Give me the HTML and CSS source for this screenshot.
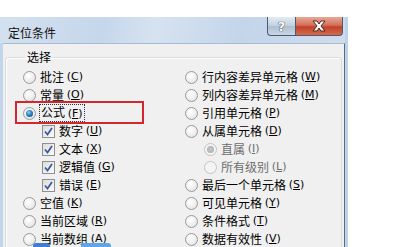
FILE: index.html
```html
<!DOCTYPE html>
<html lang="zh-CN">
<head>
    <meta charset="UTF-8">
    <meta name="viewport" content="width=device-width, initial-scale=1.0">
    <title>定位条件</title>
    <link rel="stylesheet" href="styles.css">
</head>
<body>
    <div class="dialog">
        <div class="titlebar">
            <span class="title">定位条件</span>
            <div class="caption-buttons">
                <span class="btn-help">?</span>
                <span class="btn-close">
                    <svg width="16" height="12" viewBox="0 0 16 12">
                        <path d="M2 1 H6 L8 4 L10 1 H14 L10 6 L14 11 H10 L8 8 L6 11 H2 L6 6 Z" fill="#fff" stroke="#4a2a22" stroke-width="1" stroke-linejoin="round"/>
                    </svg>
                </span>
            </div>
        </div>

        <div class="panel">
            <fieldset class="group">
                <legend>选择</legend>
                <div class="cols">
                    <ul class="col col-left">
                        <li><span class="radio"></span>批注 <span class="key">(<u>C</u>)</span></li>
                        <li><span class="radio"></span>常量 <span class="key">(<u>O</u>)</span></li>
                        <li><span class="radio checked"></span><span class="focus">公式 <span class="key">(<u>F</u>)</span></span></li>
                        <li class="sub"><span class="check"><svg width="9" height="9" viewBox="0 0 9 9"><path d="M1 4.5 L3.5 7.5 L8 1" fill="none" stroke="#3d5a9c" stroke-width="1.8"/></svg></span>数字 <span class="key">(<u>U</u>)</span></li>
                        <li class="sub"><span class="check"><svg width="9" height="9" viewBox="0 0 9 9"><path d="M1 4.5 L3.5 7.5 L8 1" fill="none" stroke="#3d5a9c" stroke-width="1.8"/></svg></span>文本 <span class="key">(<u>X</u>)</span></li>
                        <li class="sub"><span class="check"><svg width="9" height="9" viewBox="0 0 9 9"><path d="M1 4.5 L3.5 7.5 L8 1" fill="none" stroke="#3d5a9c" stroke-width="1.8"/></svg></span>逻辑值 <span class="key">(<u>G</u>)</span></li>
                        <li class="sub"><span class="check"><svg width="9" height="9" viewBox="0 0 9 9"><path d="M1 4.5 L3.5 7.5 L8 1" fill="none" stroke="#3d5a9c" stroke-width="1.8"/></svg></span>错误 <span class="key">(<u>E</u>)</span></li>
                        <li><span class="radio"></span>空值 <span class="key">(<u>K</u>)</span></li>
                        <li><span class="radio"></span>当前区域 <span class="key">(<u>R</u>)</span></li>
                        <li><span class="radio"></span>当前数组 <span class="key">(<u>A</u>)</span></li>
                    </ul>
                    <ul class="col col-right">
                        <li><span class="radio"></span>行内容差异单元格 <span class="key">(<u>W</u>)</span></li>
                        <li><span class="radio"></span>列内容差异单元格 <span class="key">(<u>M</u>)</span></li>
                        <li><span class="radio"></span>引用单元格 <span class="key">(<u>P</u>)</span></li>
                        <li><span class="radio"></span>从属单元格 <span class="key">(<u>D</u>)</span></li>
                        <li class="sub disabled"><span class="radio checked"></span>直属 <span class="key">(<u>I</u>)</span></li>
                        <li class="sub disabled"><span class="radio"></span>所有级别 <span class="key">(<u>L</u>)</span></li>
                        <li><span class="radio"></span>最后一个单元格 <span class="key">(<u>S</u>)</span></li>
                        <li><span class="radio"></span>可见单元格 <span class="key">(<u>Y</u>)</span></li>
                        <li><span class="radio"></span>条件格式 <span class="key">(<u>T</u>)</span></li>
                        <li><span class="radio"></span>数据有效性 <span class="key">(<u>V</u>)</span></li>
                    </ul>
                </div>
            </fieldset>
        </div>

        <div class="highlight"></div>
    </div>

    <div class="taskbit taskbit-a"></div>
    <div class="taskbit taskbit-b"></div>
</body>
</html>
```

FILE: styles.css
```css
html,
body {
    height: 247px;
}

body {
    margin: 0;
    padding: 0;
    background: #fff;
    font-family: "Noto Sans CJK SC", "Liberation Sans", sans-serif;
    font-size: 12px;
    color: #000;
    overflow: hidden;
}

.dialog {
    position: relative;
    margin-top: 17px;
    width: 345px;
    height: 230px;
    overflow: hidden;
    background: #c3d5ea;
    border-right: 3px solid #bcd1ea;
}

.titlebar {
    height: 26px;
    display: flex;
    justify-content: space-between;
    align-items: flex-start;
    background: linear-gradient(100deg, #d3e0ef 0%, #c6d7eb 30%, #d6e2f0 45%, #c4d5ea 70%, #cfdcec 100%);
}

.title {
    padding: 9px 0 0 8px;
    font-size: 12px;
    line-height: 14px;
    color: #111;
}

.caption-buttons {
    display: flex;
    margin-right: 2px;
}

.btn-help,
.btn-close {
    height: 18px;
    display: flex;
    align-items: center;
    justify-content: center;
    border: 1px solid #4d5a6b;
    border-top: none;
}

.btn-help {
    width: 27px;
    border-right: none;
    border-radius: 0 0 0 4px;
    background: linear-gradient(#e4ebf3, #c2d0df 50%, #aebfd3 51%, #c8d6e6);
    color: #fff;
    font-family: "DejaVu Sans", sans-serif;
    font-weight: bold;
    font-size: 13px;
    text-shadow: 0 0 1px #333, 0 0 1px #333;
}

.btn-close {
    width: 46px;
    border-radius: 0 0 4px 0;
    background: linear-gradient(#e8a898, #d3705b 45%, #c1412a 55%, #d66a4e);
}

.panel {
    margin-left: 3px;
    height: 210px;
    background: #f0f0f0;
    border-right: 1px solid #5c6b7c;
    border-top: 1px solid #a9bbd0;
    padding: 5px 2px 0 2px;
}

.group {
    margin: 0;
    padding: 0 0 0 17px;
    border: 1px solid #d5dbe1;
    border-radius: 3px;
    height: 230px;
    box-shadow: inset 1px 1px 0 #fff;
}

.group legend {
    margin-left: 2px;
    padding: 0 2px;
    font-size: 12px;
    line-height: 16px;
}

.cols {
    display: grid;
    grid-template-columns: 162px 1fr;
    margin-top: 3px;
}

.col {
    list-style: none;
    margin: 0;
    padding: 0;
}

.col li {
    height: 18px;
    display: flex;
    align-items: center;
    white-space: pre;
    line-height: 14px;
}

.col li.sub {
    padding-left: 19px;
}

.col li.disabled {
    color: #6d6d6d;
}

.key {
    font-size: 11px;
    font-family: "DejaVu Sans", sans-serif;
}

.radio {
    width: 11px;
    height: 11px;
    border: 1px solid #9a9a9a;
    border-radius: 50%;
    margin-right: 4px;
    background: radial-gradient(circle at 40% 35%, #ffffff 0%, #ececec 60%, #d8d8d8 100%);
    box-sizing: content-box;
    flex: none;
    display: flex;
    align-items: center;
    justify-content: center;
}

.radio.checked::after {
    content: "";
    width: 7px;
    height: 7px;
    border-radius: 50%;
    background: radial-gradient(circle at 40% 35%, #8fd1f5 0%, #2a84c4 45%, #0d3d66 100%);
}

.disabled .radio {
    border-color: #c4c4c4;
    background: #f4f4f4;
}

.disabled .radio.checked::after {
    background: radial-gradient(circle, #c8c8c8 0%, #a8a8a8 100%);
}

.check {
    width: 11px;
    height: 11px;
    border: 1px solid #8e8f8f;
    margin-right: 4px;
    background: linear-gradient(135deg, #dcdcdc, #fbfbfb);
    flex: none;
    display: flex;
    align-items: center;
    justify-content: center;
}

.focus {
    outline: 1px dotted #333;
    outline-offset: 0;
    padding: 0 1px;
}

.highlight {
    position: absolute;
    left: 15px;
    top: 84px;
    width: 125px;
    height: 19px;
    border: 2px solid #d2272d;
}

.taskbit {
    position: absolute;
    top: 243px;
    height: 4px;
    border-radius: 3px 3px 0 0;
}

.taskbit-a {
    left: 33px;
    width: 17px;
    background: #3c7fd2;
}

.taskbit-b {
    left: 81px;
    width: 30px;
    background: #5ea5ea;
}
```
